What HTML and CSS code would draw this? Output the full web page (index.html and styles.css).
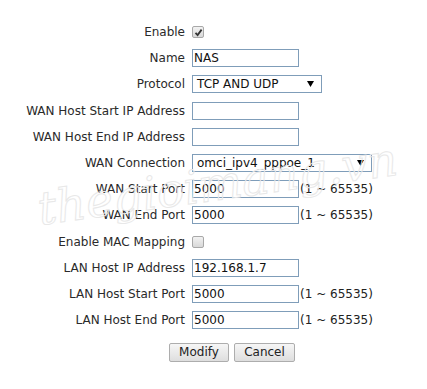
FILE: index.html
```html
<!DOCTYPE html>
<html>
<head>
<meta charset="utf-8">
<link rel="stylesheet" href="styles.css">
</head>
<body>
<div class="page">
  <div class="form">
    <label class="lbl">Enable</label>
    <div class="ctl"><span class="cb checked"><svg width="9" height="9" viewBox="0 0 9 9"><path d="M1.5 4.8 L3.6 7 L7.6 1.6" fill="none" stroke="#333" stroke-width="1.8"/></svg></span></div>

    <label class="lbl">Name</label>
    <div class="ctl"><span class="inp">NAS</span></div>

    <label class="lbl">Protocol</label>
    <div class="ctl"><span class="sel w-proto"><span class="seltext">TCP AND UDP</span><svg class="arrow" width="7" height="6" viewBox="0 0 7 6"><path d="M0 0 H7 L3.5 6 Z" fill="#000"/></svg></span></div>

    <label class="lbl">WAN Host Start IP Address</label>
    <div class="ctl"><span class="inp"></span></div>

    <label class="lbl">WAN Host End IP Address</label>
    <div class="ctl"><span class="inp"></span></div>

    <label class="lbl">WAN Connection</label>
    <div class="ctl"><span class="sel w-conn"><span class="seltext">omci_ipv4_pppoe_1</span><svg class="arrow" width="7" height="6" viewBox="0 0 7 6"><path d="M0 0 H7 L3.5 6 Z" fill="#000"/></svg></span></div>

    <label class="lbl">WAN Start Port</label>
    <div class="ctl"><span class="inp">5000</span><span class="hint">(1 ~ 65535)</span></div>

    <label class="lbl">WAN End Port</label>
    <div class="ctl"><span class="inp">5000</span><span class="hint">(1 ~ 65535)</span></div>

    <label class="lbl">Enable MAC Mapping</label>
    <div class="ctl"><span class="cb"></span></div>

    <label class="lbl">LAN Host IP Address</label>
    <div class="ctl"><span class="inp">192.168.1.7</span></div>

    <label class="lbl">LAN Host Start Port</label>
    <div class="ctl"><span class="inp">5000</span><span class="hint">(1 ~ 65535)</span></div>

    <label class="lbl">LAN Host End Port</label>
    <div class="ctl"><span class="inp">5000</span><span class="hint">(1 ~ 65535)</span></div>
  </div>
  <div class="buttons">
    <button class="btn btn-modify">Modify</button>
    <button class="btn btn-cancel">Cancel</button>
  </div>
  <div class="watermark">thegioimang.vn</div>
</div>
</body>
</html>
```
FILE: styles.css
```css
html, body {
  margin: 0;
  padding: 0;
  background: #ffffff;
}
body {
  font-family: "DejaVu Sans", Tahoma, Verdana, sans-serif;
  font-size: 12px;
  color: #2a2a2a;
}
.page {
  position: relative;
  width: 427px;
  height: 389px;
  overflow: hidden;
}
.form {
  display: grid;
  grid-template-columns: 185px 1fr;
  column-gap: 7px;
  row-gap: 8.2px;
  padding-top: 23px;
  grid-auto-rows: 18px;
}
.lbl {
  display: flex;
  align-items: center;
  justify-content: flex-end;
  white-space: nowrap;
}
.ctl {
  display: flex;
  align-items: center;
}
.inp {
  box-sizing: border-box;
  width: 107px;
  height: 18px;
  border: 1px solid #7f9db9;
  background: #fff;
  padding: 0 1px;
  line-height: 16px;
  color: #111;
  font-size: 12px;
}
.hint {
  margin-left: 1px;
  font-size: 12px;
  color: #222;
}
.sel {
  box-sizing: border-box;
  height: 18px;
  border: 1px solid #7f9db9;
  background: #fff;
  display: flex;
  align-items: center;
  padding: 0 7px 0 4px;
  color: #111;
  font-size: 12px;
}
.seltext {
  flex: 1;
}
.w-proto { width: 130px; }
.w-conn { width: 180px; }
.cb {
  box-sizing: border-box;
  width: 12px;
  height: 12px;
  border: 1px solid #a8a8a8;
  border-radius: 2px;
  background: linear-gradient(#f2f2f2, #d8d8d8);
  display: flex;
  align-items: center;
  justify-content: center;
}
.buttons {
  display: flex;
  gap: 5px;
  padding-left: 169px;
  margin-top: 14px;
}
.btn {
  box-sizing: border-box;
  height: 19px;
  font-family: "DejaVu Sans", Tahoma, sans-serif;
  font-size: 12px;
  color: #222;
  border: 1px solid #adadad;
  border-radius: 2px;
  background: linear-gradient(#f6f6f6, #dedede);
  padding: 0;
  line-height: 17px;
}
.btn-modify { width: 60px; }
.btn-cancel { width: 61px; }
.watermark {
  position: absolute;
  left: 40px;
  top: 186px;
  font-family: "DejaVu Serif", serif;
  font-style: italic;
  font-size: 46px;
  line-height: 46px;
  color: transparent;
  -webkit-text-stroke: 1px #e8e8e8;
  transform: rotate(-8deg);
  transform-origin: 0 80%;
  pointer-events: none;
  white-space: nowrap;
}
```
